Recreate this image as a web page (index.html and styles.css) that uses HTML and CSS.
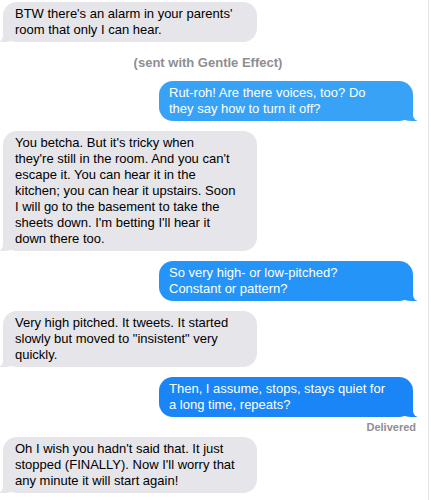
FILE: index.html
```html
<!DOCTYPE html>
<html lang="en">
<head>
  <meta charset="UTF-8" />
  <title>Messages</title>
  <link rel="stylesheet" href="styles.css">
</head>
<body>

  <div class="thread">
    <div class="msg them">BTW there's an alarm in your parents'<br>room that only I can hear.</div>
    <div class="effect">(sent with Gentle Effect)</div>
    <div class="msg me light">Rut-roh! Are there voices, too? Do<br>they say how to turn it off?</div>
    <div class="msg them">You betcha. But it's tricky when<br>they're still in the room. And you can't<br>escape it. You can hear it in the<br>kitchen; you can hear it upstairs. Soon<br>I will go to the basement to take the<br>sheets down. I'm betting I'll hear it<br>down there too.</div>
    <div class="msg me mid">So very high- or low-pitched?<br>Constant or pattern?</div>
    <div class="msg them">Very high pitched. It tweets. It started<br>slowly but moved to "insistent" very<br>quickly.</div>
    <div class="msg me deep">Then, I assume, stops, stays quiet for<br>a long time, repeats?</div>
    <div class="status">Delivered</div>
    <div class="msg them">Oh I wish you hadn't said that. It just<br>stopped (FINALLY). Now I'll worry that<br>any minute it will start again!</div>
  </div>

</body>
</html>
```

FILE: styles.css
```css
body {
  margin: 0;
  background-color: #fff;
  font-family: "Liberation Sans", Arial, sans-serif;
}
.thread {
  width: 429px;
  height: 500px;
  box-sizing: border-box;
  border-right: 1px solid #e4e4e4;
  padding-top: 2px;
  display: flex;
  flex-direction: column;
  overflow: hidden;
}
.msg {
  position: relative;
  width: 254px;
  box-sizing: border-box;
  padding: 4px 12px;
  border-radius: 14px;
  font-size: 13px;
  line-height: 16px;
  margin-top: 10px;
}
.msg:first-child {
  margin-top: 0;
}
/* tail: a coloured block with a white scoop cut over it, both behind the bubble */
.msg::before,
.msg::after {
  content: "";
  position: absolute;
  bottom: 0;
  z-index: -1;
}
.them {
  align-self: flex-start;
  margin-left: 3px;
  background-color: #e5e5ea;
  color: #000;
}
.them::before {
  left: -4px;
  width: 20px;
  height: 16px;
  background: inherit;
  border-bottom-right-radius: 14px 12px;
}
.them::after {
  left: -10px;
  width: 10px;
  height: 16px;
  background-color: #fff;
  border-bottom-right-radius: 6px;
}
.me {
  align-self: flex-end;
  margin-right: 15px;
  padding: 4px 12px 4px 10px;
  color: #fff;
}
.me::before {
  right: -4px;
  width: 20px;
  height: 16px;
  background: inherit;
  border-bottom-left-radius: 14px 12px;
}
.me::after {
  right: -10px;
  width: 10px;
  height: 16px;
  background-color: #fff;
  border-bottom-left-radius: 6px;
}
.light {
  background-color: #38a2f7;
}
.mid {
  background-color: #2594f8;
}
.deep {
  background-color: #1a85f6;
}
.effect {
  margin-top: 13px;
  padding-right: 12px;
  text-align: center;
  font-size: 13px;
  line-height: 16px;
  font-weight: bold;
  color: #8e8e93;
}
.status {
  align-self: flex-end;
  margin: 3px 12px 0 0;
  font-size: 11px;
  line-height: 14px;
  font-weight: bold;
  color: #8e8e93;
}
.status + .msg {
  margin-top: 3px;
}
```
